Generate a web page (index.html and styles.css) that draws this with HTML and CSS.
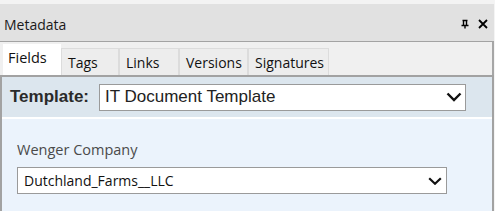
FILE: index.html
```html
<!DOCTYPE html>
<html>
<head>
<meta charset="utf-8">
<link rel="stylesheet" href="styles.css">
</head>
<body>
<div class="pane">
  <div class="top-strip"></div>
  <div class="titlebar">
    <span class="title">Metadata</span>
    <span class="title-icons">
      <svg class="pin" width="10" height="10" viewBox="0 0 10 10"><path d="M2.5 1.5h5M3.5 1.5v5M6.5 1.5v5M1.5 6.5h7M5 6.5v3" stroke="#000" stroke-width="1.4" fill="none"/></svg>
      <svg class="close" width="10" height="10" viewBox="0 0 10 10"><path d="M1 1l8 8M9 1l-8 8" stroke="#000" stroke-width="1.8" fill="none"/></svg>
    </span>
  </div>
  <div class="tabs">
    <div class="tab active">Fields</div>
    <div class="tab t-tags">Tags</div>
    <div class="tab t-links">Links</div>
    <div class="tab t-versions">Versions</div>
    <div class="tab t-sigs">Signatures</div>
  </div>
  <div class="panel">
    <div class="template-band">
      <span class="template-label">Template:</span>
      <div class="select template-select">
        <span class="select-text">IT Document Template</span>
        <svg class="chev" width="16" height="10" viewBox="0 0 16 10"><path d="M1.5 1.5l6.5 6.5l6.5-6.5" stroke="#111" stroke-width="2.4" fill="none"/></svg>
      </div>
    </div>
    <div class="content">
      <div class="field-label">Wenger Company</div>
      <div class="select field-select">
        <span class="select-text field-text">Dutchland_Farms__LLC</span>
        <svg class="chev small" width="14" height="8" viewBox="0 0 14 8"><path d="M1.2 1.2l5.8 5.5l5.8-5.5" stroke="#111" stroke-width="2.2" fill="none"/></svg>
      </div>
    </div>
  </div>
</div>
</body>
</html>
```
FILE: styles.css
```css
html, body {
  margin: 0;
  padding: 0;
  background: #f4f4f4;
}
.pane {
  width: 494px;
  height: 211px;
  display: flex;
  flex-direction: column;
  overflow: hidden;
}
.top-strip {
  height: 4px;
  background: #f3f3f3;
}
.titlebar {
  height: 37px;
  background: #e1e1e1;
  border-bottom: 1px solid #a3a3a3;
  display: flex;
  align-items: center;
  justify-content: space-between;
  padding: 0 6px 0 4px;
}
.title {
  font-family: "Open Sans", sans-serif;
  font-size: 14px;
  color: #1a1a1a;
  position: relative;
  top: 2px;
}
.title-icons {
  display: flex;
  gap: 8px;
  align-items: center;
  position: relative;
  top: 1px;
}
.tabs {
  height: 33px;
  background: #f0f0f0;
  border-right: 2px solid #a6a6a6;
  display: flex;
  align-items: flex-end;
  padding-left: 3px;
}
.tab {
  font-family: "Open Sans", sans-serif;
  font-size: 14px;
  color: #111;
  height: 27px;
  box-sizing: border-box;
  border: 1px solid #dcdcdc;
  border-bottom: none;
  background: #ededed;
  display: flex;
  align-items: center;
  padding-left: 6px;
}
.tab.active {
  background: #ffffff;
  border-color: #ffffff;
  height: 31px;
  padding-left: 4px;
  font-size: 14.5px;
  align-items: flex-start;
  padding-top: 3px;
}
.tab.active { width: 58px; }
.t-tags { width: 58px; }
.t-links { width: 60px; }
.t-versions { width: 69px; }
.t-sigs { width: 81px; }
.panel {
  flex: 1;
  border: 2px solid #a2a2a2;
  border-bottom: none;
  display: flex;
  flex-direction: column;
}
.template-band {
  height: 40px;
  background: #dce6ee;
  border-bottom: 2px solid #ffffff;
  display: flex;
  align-items: center;
  padding-left: 8px;
}
.template-label {
  font-family: "Liberation Sans", Arial, sans-serif;
  font-weight: bold;
  font-size: 17px;
  color: #2a2a2a;
  width: 89px;
}
.select {
  box-sizing: border-box;
  height: 27px;
  background: #fff;
  border: 1px solid #9a9a9a;
  display: flex;
  align-items: center;
  justify-content: space-between;
}
.template-select {
  width: 367px;
  padding: 0 3px 0 5px;
}
.select-text {
  font-family: "Liberation Sans", Arial, sans-serif;
  font-size: 17px;
  color: #222;
}
.content {
  flex: 1;
  background: #ebf3fc;
  padding: 21px 0 0 15px;
}
.field-label {
  font-family: "Open Sans", sans-serif;
  font-size: 14.5px;
  color: #4a4a4a;
  height: 27px;
}
.field-select {
  width: 430px;
  padding: 0 4px 0 6px;
}
.field-text {
  font-family: "Open Sans", sans-serif;
  font-size: 14px;
  color: #111;
}
```
